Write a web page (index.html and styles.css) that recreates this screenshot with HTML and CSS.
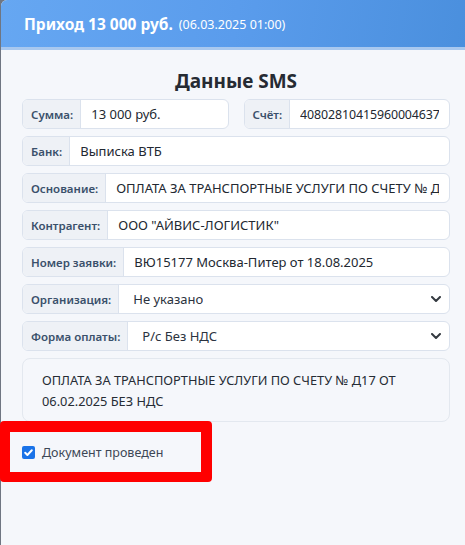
FILE: index.html
```html
<!DOCTYPE html>
<html lang="ru">
<head>
<meta charset="utf-8">
<title>Приход</title>
<link rel="stylesheet" href="styles.css">
</head>
<body>
<div class="modal">
  <div class="modal-header">
    <span class="title">Приход 13 000 руб.</span>
    <span class="date">(06.03.2025 01:00)</span>
  </div>
  <div class="modal-body">
    <h2 class="section-title">Данные SMS</h2>
    <div class="fields">
      <div class="row2">
        <div class="group"><span class="addon">Сумма:</span><span class="control"><span class="val">13 000 руб.</span></span></div>
        <div class="group"><span class="addon">Счёт:</span><span class="control"><span class="val digits">40802810415960004637</span></span></div>
      </div>
      <div class="group"><span class="addon">Банк:</span><span class="control"><span class="val">Выписка ВТБ</span></span></div>
      <div class="group"><span class="addon">Основание:</span><span class="control"><span class="val">ОПЛАТА ЗА ТРАНСПОРТНЫЕ УСЛУГИ ПО СЧЕТУ № Д17 ОТ 06.02.2025 БЕЗ НДС</span></span></div>
      <div class="group"><span class="addon">Контрагент:</span><span class="control"><span class="val">ООО "АЙВИС-ЛОГИСТИК"</span></span></div>
      <div class="group"><span class="addon">Номер заявки:</span><span class="control"><span class="val">ВЮ15177 Москва-Питер от 18.08.2025</span></span></div>
      <div class="group"><span class="addon">Организация:</span><span class="control select"><span class="val">Не указано</span><svg class="chev" viewBox="0 0 10 6" width="10" height="6"><path d="M1 1l4 4 4-4" fill="none" stroke="#343a40" stroke-width="2" stroke-linecap="round" stroke-linejoin="round"/></svg></span></div>
      <div class="group"><span class="addon">Форма оплаты:</span><span class="control select"><span class="val">Р/с Без НДС</span><svg class="chev" viewBox="0 0 10 6" width="10" height="6"><path d="M1 1l4 4 4-4" fill="none" stroke="#343a40" stroke-width="2" stroke-linecap="round" stroke-linejoin="round"/></svg></span></div>
      <div class="note">ОПЛАТА ЗА ТРАНСПОРТНЫЕ УСЛУГИ ПО СЧЕТУ № Д17 ОТ 06.02.2025 БЕЗ НДС</div>
    </div>
    <label class="check"><span class="box"><svg viewBox="0 0 13 13" width="13" height="13"><path d="M3.2 6.8l2.2 2.2 4.4-4.8" fill="none" stroke="#fff" stroke-width="2" stroke-linecap="round" stroke-linejoin="round"/></svg></span>Документ проведен</label>
  </div>
</div>
<div class="highlight"></div>
</body>
</html>
```
FILE: styles.css
```css
html, body {
  margin: 0;
  padding: 0;
}
body {
  width: 465px;
  height: 545px;
  overflow: hidden;
  background: #6f7682;
  font-family: "Noto Sans", "Open Sans", sans-serif;
  position: relative;
}
.modal {
  margin-left: 1px;
  width: 469px;
  height: 545px;
  background: #f5f7fb;
  border-top-left-radius: 6px;
  overflow: hidden;
}
.modal-header {
  height: 50px;
  box-sizing: border-box;
  padding: 0 0 0 23px;
  display: flex;
  align-items: center;
  gap: 6px;
  background: linear-gradient(100deg, #66a7f2 0%, #5a9cec 50%, #4a8fdd 100%);
  border-bottom: 3px solid #a8c8ef;
  color: #fff;
}
.title {
  font-weight: 700;
  font-size: 15.5px;
}
.date {
  font-size: 12.5px;
  position: relative;
  top: 1px;
}
.modal-body {
  padding: 0 20px 0 21px;
}
.section-title {
  margin: 0;
  padding-top: 18px;
  height: 49px;
  box-sizing: border-box;
  text-align: center;
  font-size: 19px;
  font-weight: 700;
  color: #262b33;
  line-height: 26px;
}
.fields {
  display: flex;
  flex-direction: column;
  gap: 7px;
}
.row2 {
  display: grid;
  grid-template-columns: 1fr 1fr;
  gap: 15px;
}
.group {
  display: flex;
  height: 30px;
  box-sizing: border-box;
  border: 1px solid #dbe2ed;
  border-radius: 6px;
  background: #fff;
  overflow: hidden;
}
.addon {
  flex: none;
  display: flex;
  align-items: center;
  padding: 0 7px 0 8px;
  background: #eef1f6;
  border-right: 1px solid #dbe2ed;
  color: #3a506b;
  font-size: 11.5px;
  font-weight: 600;
}
.control {
  flex: 1;
  min-width: 0;
  display: flex;
  align-items: center;
  padding: 0 10px;
  font-size: 13px;
  color: #222831;
  white-space: nowrap;
}
.val {
  overflow: hidden;
  min-width: 0;
}
.digits {
  font-size: 12.4px;
  letter-spacing: -0.1px;
}
.select {
  padding-left: 14px;
  justify-content: space-between;
  color: #2b3340;
}
.chev {
  flex: none;
  margin-right: -2px;
}
.note {
  border: 1px solid #e3e8ef;
  border-radius: 8px;
  height: 64px;
  box-sizing: border-box;
  padding: 11px 20px 0 19px;
  font-size: 12.8px;
  line-height: 21px;
  color: #262c35;
}
.check {
  display: flex;
  align-items: center;
  gap: 7px;
  margin-top: 22px;
  font-size: 12.5px;
  color: #3d4756;
}
.box {
  width: 13px;
  height: 13px;
  border-radius: 2px;
  background: #1a73e8;
  display: flex;
}
.highlight {
  position: absolute;
  left: 0;
  top: 421px;
  width: 212px;
  height: 61px;
  box-sizing: border-box;
  border: 10px solid #ff0000;
  border-width: 11px 11px 10px 10px;
  border-radius: 4px;
}
```
